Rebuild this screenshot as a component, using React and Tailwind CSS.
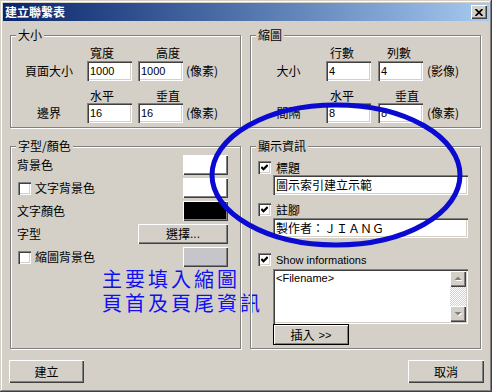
import React from "react";

const raised = "shadow-[inset_1px_1px_0_#ffffff,inset_-1px_-1px_0_#404040,inset_-2px_-2px_0_#808080]";
const sunken = "shadow-[inset_1px_1px_0_#808080,inset_2px_2px_0_#404040,inset_-1px_-1px_0_#ffffff,inset_-2px_-2px_0_#d4d0c8]";
const latin = "font-['Liberation_Sans',Arial,sans-serif]";

function Group({ label, className = "", children }) {
  return (
    <div className={`relative border border-[#808080] shadow-[inset_1px_1px_0_#ffffff,1px_1px_0_#ffffff] ${className}`}>
      <span className="absolute -top-[8px] left-[5px] bg-[#d4d0c8] px-[2px] leading-[14px]">{label}</span>
      {children}
    </div>
  );
}

function Field({ value, className = "" }) {
  return (
    <div className={`flex h-[20px] w-[45px] items-center bg-white pl-[3px] text-[11px] ${latin} ${sunken} ${className}`}>
      {value}
    </div>
  );
}

function Check({ checked }) {
  return (
    <span className={`flex h-[13px] w-[13px] shrink-0 items-center justify-center bg-white ${sunken}`}>
      {checked && (
        <svg width="7" height="7" viewBox="0 0 7 7">
          <polyline points="0.3,3 2.5,5.2 6.7,1" fill="none" stroke="#000" strokeWidth="2.2" />
        </svg>
      )}
    </span>
  );
}

function Swatch({ color, className = "" }) {
  return <div className={`h-[20px] w-[45px] ${raised} ${color} ${className}`} />;
}

function Arrow({ up }) {
  return (
    <div className={`flex h-[16px] w-[16px] items-center justify-center bg-[#d4d0c8] ${raised}`}>
      <svg width="9" height="6" viewBox="0 0 9 6">
        {up ? (
          <>
            <polygon points="1.5,5 8.5,5 5,1.5" fill="#ffffff" />
            <polygon points="0.5,4 7.5,4 4,0.5" fill="#808080" />
          </>
        ) : (
          <>
            <polygon points="1.5,2 8.5,2 5,5.5" fill="#ffffff" />
            <polygon points="0.5,1 7.5,1 4,4.5" fill="#808080" />
          </>
        )}
      </svg>
    </div>
  );
}

export default function App() {
  return (
    <div className="relative flex h-[392px] w-[492px] flex-col overflow-hidden bg-[#d4d0c8] p-[3px] font-['Noto_Sans_CJK_TC','Noto_Sans_CJK_SC',sans-serif] text-[12px] leading-[14px] text-black shadow-[inset_-1px_-1px_0_#404040,inset_1px_1px_0_#d4d0c8,inset_-2px_-2px_0_#808080,inset_2px_2px_0_#ffffff]">
      {/* title bar */}
      <div className="flex h-[18px] items-center justify-between bg-linear-to-r from-[#0a246a] to-[#a6caf0] pl-[2px] pr-[2px]">
        <span className="font-bold text-white">建立聯繫表</span>
        <div className={`flex h-[14px] w-[16px] items-center justify-center bg-[#d4d0c8] ${raised}`}>
          <svg width="8" height="7" viewBox="0 0 8 7">
            <path d="M0.5 0 L7.5 7 M7.5 0 L0.5 7" stroke="#000" strokeWidth="1.7" />
          </svg>
        </div>
      </div>

      {/* groups */}
      <div className="grid grid-cols-[231px_231px] gap-x-[9px] gap-y-[18px] pl-[7px] pr-[8px] pt-[14px]">
        <Group label="大小" className="h-[93px]">
          <div className="mt-[10px] flex pl-[79px]">
            <span>寬度</span>
            <span className="ml-[42px]">高度</span>
          </div>
          <div className="mt-[1px] flex items-center">
            <span className="w-[76px] text-center">頁面大小</span>
            <Field value="1000" />
            <Field value="1000" className="ml-[6px]" />
            <span className="ml-[3px]">(像素)</span>
          </div>
          <div className="mt-[8px] flex pl-[79px]">
            <span>水平</span>
            <span className="ml-[42px]">垂直</span>
          </div>
          <div className="flex items-center">
            <span className="w-[76px] text-center">邊界</span>
            <Field value="16" />
            <Field value="16" className="ml-[6px]" />
            <span className="ml-[3px]">(像素)</span>
          </div>
        </Group>

        <Group label="縮圖" className="h-[93px]">
          <div className="mt-[10px] flex pl-[79px]">
            <span>行數</span>
            <span className="ml-[33px]">列數</span>
          </div>
          <div className="mt-[1px] flex items-center">
            <span className="w-[75px] text-center">大小</span>
            <Field value="4" />
            <Field value="4" className="ml-[7px]" />
            <span className="ml-[4px]">(影像)</span>
          </div>
          <div className="mt-[8px] flex pl-[79px]">
            <span>水平</span>
            <span className="ml-[41px]">垂直</span>
          </div>
          <div className="flex items-center">
            <span className="w-[75px] text-center">間隔</span>
            <Field value="8" />
            <Field value="8" className="ml-[7px]" />
            <span className="ml-[4px]">(像素)</span>
          </div>
        </Group>

        <Group label="字型/顏色" className="h-[203px]">
          <div className="mt-[8px] flex flex-col gap-[3px] pl-[6px] pr-[12px]">
            <div className="flex h-[20px] items-center justify-between">
              <span>背景色</span>
              <Swatch color="bg-white" />
            </div>
            <div className="flex h-[20px] items-center justify-between">
              <div className="flex items-center pl-[1px]">
                <Check />
                <span className="ml-[4px]">文字背景色</span>
              </div>
              <Swatch color="bg-white" />
            </div>
            <div className="flex h-[20px] items-center justify-between">
              <span>文字顏色</span>
              <Swatch color="bg-black" />
            </div>
            <div className="flex h-[20px] items-center justify-between">
              <span>字型</span>
              <div className={`flex h-[20px] w-[90px] items-center justify-center ${raised}`}>
                選擇<span className={latin}>...</span>
              </div>
            </div>
            <div className="flex h-[20px] items-center justify-between">
              <div className="flex items-center pl-[1px]">
                <Check />
                <span className="ml-[4px]">縮圖背景色</span>
              </div>
              <Swatch color="bg-[#c6c5c9]" className="w-[44px]" />
            </div>
          </div>
          <div className="whitespace-nowrap pl-[91px] text-[20px] leading-[24px] tracking-[3px] text-[#1010f0]">
            <div>主要填入縮圖</div>
            <div>頁首及頁尾資訊</div>
          </div>
        </Group>

        <Group label="顯示資訊" className="h-[203px]">
          <div className="flex flex-col pl-[7px]">
            <div className="mt-[14px] flex h-[13px] items-center">
              <Check checked />
              <span className="ml-[5px]">標題</span>
            </div>
            <div className={`ml-[15px] mt-[1px] flex h-[20px] w-[195px] items-center bg-white pl-[3px] ${sunken}`}>
              圖示索引建立示範
            </div>
            <div className="mt-[8px] flex h-[13px] items-center">
              <Check checked />
              <span className="ml-[5px]">註腳</span>
            </div>
            <div className={`ml-[15px] mt-[2px] flex h-[20px] w-[195px] items-center bg-white pl-[3px] ${sunken}`}>
              製作者：ＪＩＡＮＧ
            </div>
            <div className="mt-[15px] flex h-[13px] items-center">
              <Check checked />
              <span className={`ml-[5px] text-[11px] ${latin}`}>Show informations</span>
            </div>
            <div className={`ml-[15px] mt-[3px] flex h-[55px] w-[195px] bg-white p-[2px] ${sunken}`}>
              <div className={`flex-1 pl-[1px] pt-[1px] text-[11px] leading-[13px] ${latin}`}>&lt;Filename&gt;</div>
              <div className="flex w-[16px] flex-col">
                <Arrow up />
                <div className="flex-1 bg-[image:repeating-conic-gradient(#ffffff_0%_25%,#d4d0c8_0%_50%)] bg-size-[2px_2px]" />
                <Arrow />
              </div>
            </div>
            <div className={`ml-[15px] flex h-[21px] w-[76px] items-center justify-center border border-black shadow-[inset_1px_1px_0_#ffffff,inset_-1px_-1px_0_#808080]`}>
              插入 <span className={`ml-[4px] text-[11px] ${latin}`}>&gt;&gt;</span>
            </div>
          </div>
        </Group>
      </div>

      {/* bottom buttons */}
      <div className="mt-[11px] flex justify-between pl-[6px] pr-[5px]">
        <div className={`flex h-[23px] w-[75px] items-center justify-center ${raised}`}>建立</div>
        <div className={`flex h-[23px] w-[76px] items-center justify-center ${raised}`}>取消</div>
      </div>

      {/* annotation ellipse */}
      <svg className="pointer-events-none absolute left-0 top-0" width="492" height="392" viewBox="0 0 492 392">
        <ellipse cx="336" cy="175" rx="124" ry="70" fill="none" stroke="#0a0ad0" strokeWidth="5" />
      </svg>
    </div>
  );
}
